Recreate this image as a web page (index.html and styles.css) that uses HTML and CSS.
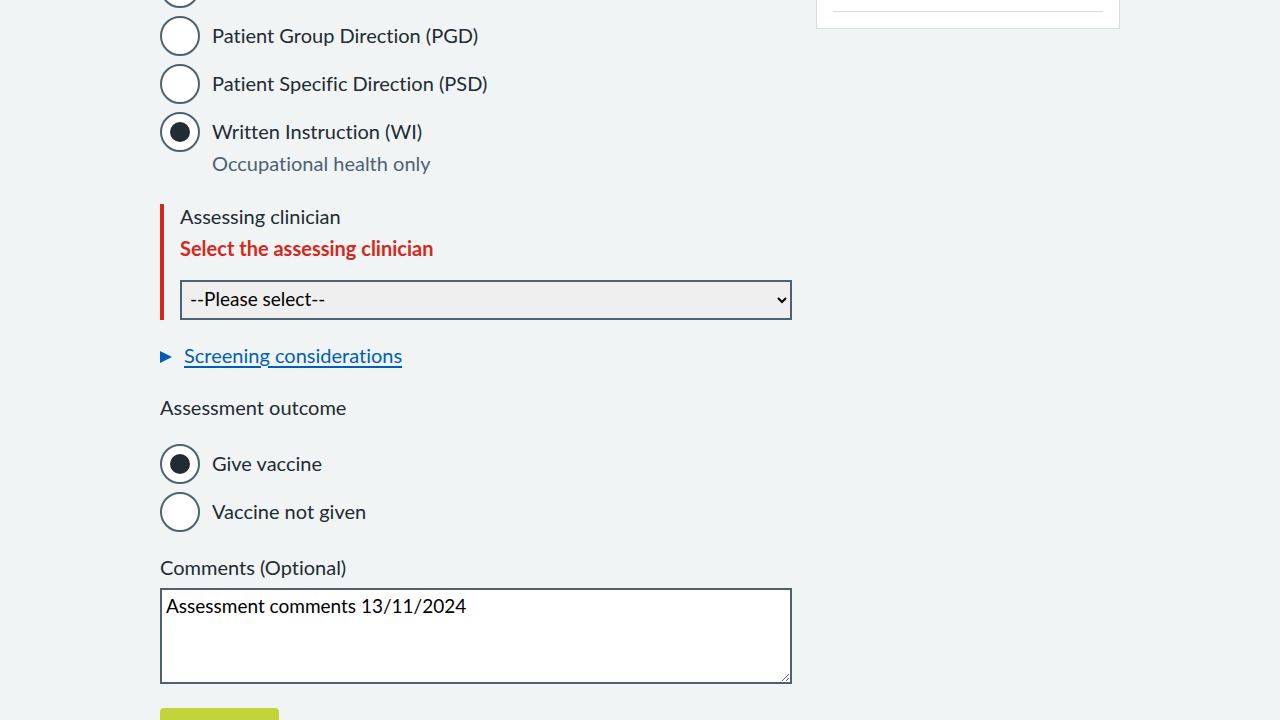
FILE: index.html
```html
<!DOCTYPE html>
<html lang="en">
<head>
<meta charset="utf-8">
<title>Assessment</title>
<link rel="stylesheet" href="styles.css">
</head>
<body>
<div class="container">
  <main class="main">
    <fieldset class="fieldset radios-group">
      <div class="radio">
        <span class="radio-input"></span>
        <label class="radio-label">National protocol</label>
      </div>
      <div class="radio">
        <span class="radio-input"></span>
        <label class="radio-label">Patient Group Direction (PGD)</label>
      </div>
      <div class="radio">
        <span class="radio-input"></span>
        <label class="radio-label">Patient Specific Direction (PSD)</label>
      </div>
      <div class="radio">
        <span class="radio-input checked"></span>
        <div class="radio-text">
          <label class="radio-label">Written Instruction (WI)</label>
          <div class="radio-hint">Occupational health only</div>
        </div>
      </div>
    </fieldset>

    <div class="form-group error">
      <label class="label">Assessing clinician</label>
      <span class="error-message">Select the assessing clinician</span>
      <select class="select">
        <option>--Please select--</option>
      </select>
    </div>

    <details class="details">
      <summary class="summary"><span class="triangle"></span><span class="summary-text">Screening considerations</span></summary>
    </details>

    <fieldset class="fieldset outcome">
      <legend class="legend">Assessment outcome</legend>
      <div class="radio">
        <span class="radio-input checked"></span>
        <label class="radio-label">Give vaccine</label>
      </div>
      <div class="radio">
        <span class="radio-input"></span>
        <label class="radio-label">Vaccine not given</label>
      </div>
    </fieldset>

    <div class="form-group comments">
      <label class="label">Comments (Optional)</label>
      <textarea class="textarea" rows="3">Assessment comments 13/11/2024</textarea>
    </div>

    <button class="button" type="button"></button>
  </main>

  <aside class="sidebar">
    <div class="card">
      <hr class="rule">
    </div>
  </aside>
</div>
</body>
</html>
```

FILE: styles.css
```css
html, body {
  margin: 0;
  padding: 0;
}
body {
  background: #f0f4f5;
  color: #212b32;
  font-family: "Lato", "Noto Sans", sans-serif;
  font-size: 20px;
  line-height: 28px;
  font-variant-ligatures: none;
  overflow: hidden;
}
.container {
  width: 960px;
  margin: 0 auto;
  display: grid;
  grid-template-columns: 632px 304px;
  column-gap: 24px;
  align-items: start;
}
.main {
  margin-top: -32px;
  display: flex;
  flex-direction: column;
}
.fieldset {
  border: 0;
  margin: 0;
  padding: 0;
  min-width: 0;
}
.radio {
  display: flex;
  align-items: flex-start;
  margin-bottom: 8px;
}
.radio:last-child { margin-bottom: 0; }
.radio-input {
  flex: 0 0 auto;
  width: 40px;
  height: 40px;
  box-sizing: border-box;
  border: 2px solid #4c6272;
  border-radius: 50%;
  background: #ffffff;
  position: relative;
}
.radio-input.checked::after {
  content: "";
  position: absolute;
  left: 8px;
  top: 8px;
  width: 20px;
  height: 20px;
  border-radius: 50%;
  background: #212b32;
}
.radio-label {
  display: block;
  padding: 5px 12px 7px;
  line-height: 28px;
}
.radio-text .radio-label { padding-bottom: 0; }
.radio-hint {
  padding: 4px 12px 0;
  color: #4c6272;
}
.radios-group { margin-bottom: 27px; }

.form-group.error {
  border-left: 4px solid #d5281b;
  padding-left: 16px;
  display: flex;
  flex-direction: column;
  align-items: stretch;
}
.label {
  display: block;
  line-height: 28px;
}
.error .label { line-height: 24px; }
.error-message {
  display: block;
  color: #d5281b;
  font-weight: 700;
  margin-top: 6px;
  margin-bottom: 18px;
}
.select {
  height: 40px;
  box-sizing: border-box;
  border: 2px solid #4c6272;
  border-radius: 0;
  background-color: #efefef;
  color: #000;
  font-family: "Lato", "Noto Sans", sans-serif;
  font-size: 19px;
  padding: 0 4px 4px;
}

.details { margin-top: 21px; }
.summary {
  list-style: none;
  display: flex;
  align-items: center;
  cursor: pointer;
}
.summary::-webkit-details-marker { display: none; }
.triangle {
  width: 0;
  height: 0;
  border-top: 6.5px solid transparent;
  border-bottom: 6.5px solid transparent;
  border-left: 12px solid #005eb8;
  margin: 4px 12px 0 0;
}
.summary-text {
  color: #005eb8;
  text-decoration: underline;
  text-underline-offset: 3px;
}

.outcome { margin-top: 24px; }
.legend {
  padding: 0;
  margin-bottom: 23px;
  line-height: 28px;
}

.comments { margin-top: 21px; display: flex; flex-direction: column; }
.comments .label { margin-bottom: 7px; }
.textarea {
  height: 96px;
  box-sizing: border-box;
  border: 2px solid #4c6272;
  border-radius: 0;
  background: #fff;
  color: #000;
  font-family: "Lato", "Noto Sans", sans-serif;
  font-size: 19px;
  line-height: 24px;
  padding: 4px 4px;
  font-variant-ligatures: none;
}

.button {
  align-self: flex-start;
  margin-top: 24px;
  background: #c5d33a;
  border: 0;
  border-radius: 4px;
  width: 119px;
  height: 48px;
}

.card {
  margin-top: -20px;
  background: #fff;
  border: 1px solid #d8dde0;
  padding: 16px;
}
.rule {
  margin: 14px 0 0;
  border: 0;
  border-top: 1px solid #d8dde0;
  height: 0;
}
```
